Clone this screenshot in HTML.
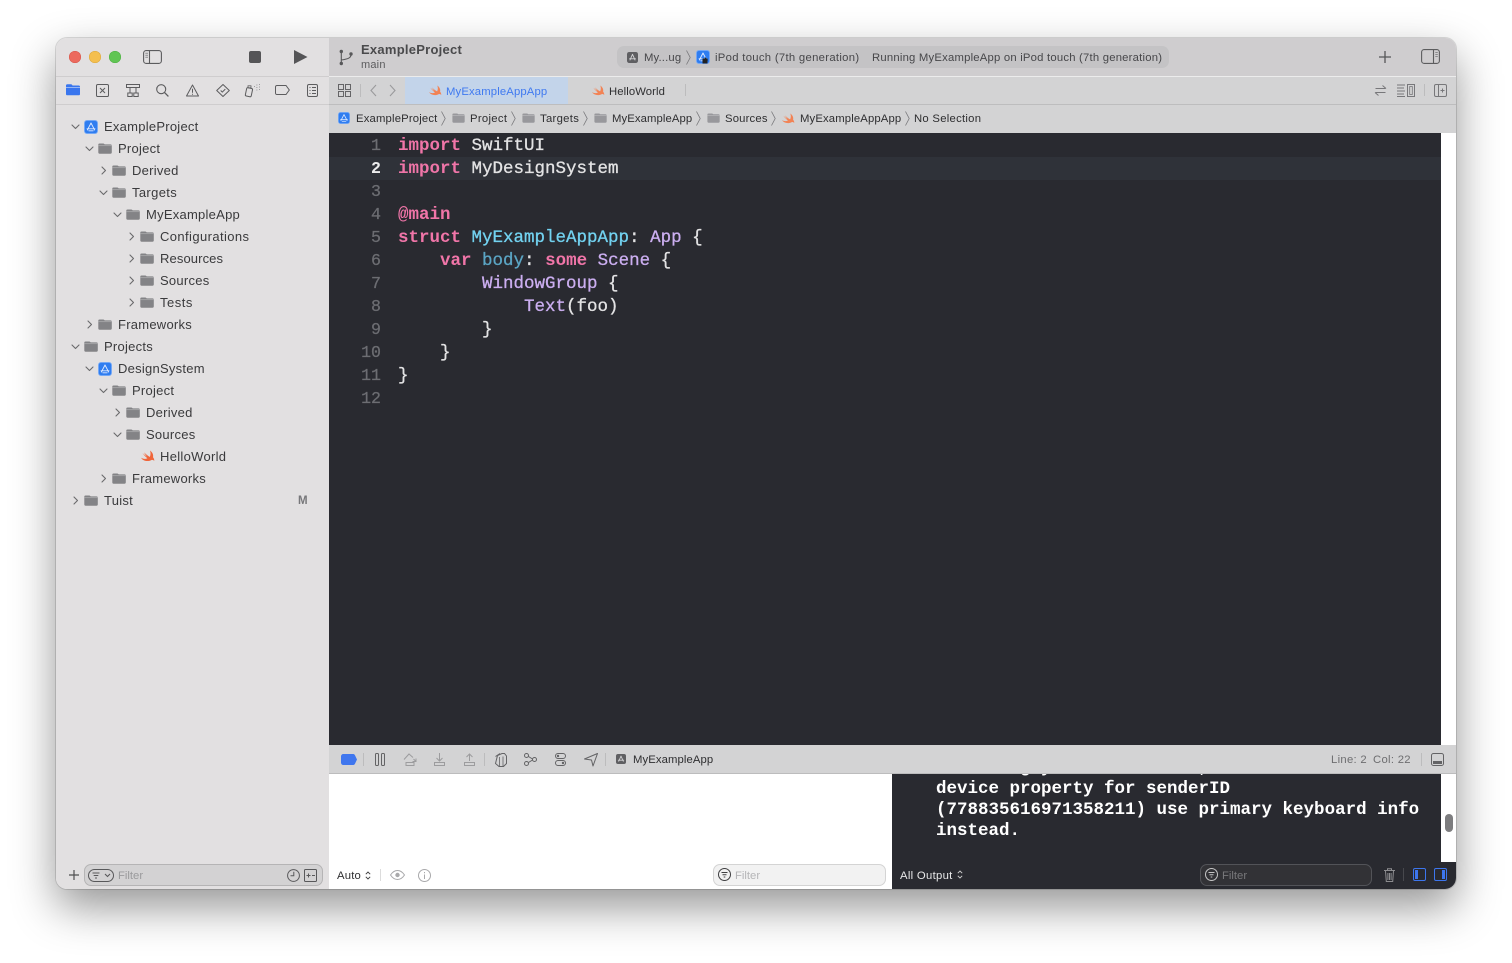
<!DOCTYPE html>
<html lang="en">
<head>
<meta charset="utf-8">
<title>Xcode</title>
<style>
html,body{margin:0;padding:0;width:1512px;height:963px;overflow:hidden;background:#fff;font-family:"Liberation Sans",sans-serif;}
.a{position:absolute;white-space:nowrap;}
#win{position:absolute;left:56px;top:38px;width:1400px;height:851px;border-radius:11px;box-shadow:0 18px 44px rgba(0,0,0,.42),0 0 0 1px rgba(0,0,0,.13);}
#clip{position:absolute;left:56px;top:38px;width:1400px;height:851px;border-radius:11px;overflow:hidden;background:#e2e0e1;}
.full{position:absolute;left:-56px;top:-38px;width:1512px;height:963px;}
.r{position:absolute;}
.tr{font-size:13px;line-height:16px;color:#3a3a3c;letter-spacing:.25px;margin-top:1px;}
.bc{font-size:11.3px;line-height:14px;color:#2e2e30;top:112px;letter-spacing:.17px;}
.code{font-family:"Liberation Mono",monospace;font-size:17.5px;line-height:23px;left:398px;color:#e3e3e4;white-space:pre;font-weight:400;-webkit-text-stroke:.3px currentColor;}
.ln{font-family:"Liberation Mono",monospace;font-size:16.6px;line-height:23px;color:#6c6d72;width:52px;left:329px;text-align:right;-webkit-text-stroke:.25px currentColor;}
.con{left:936px;font-family:"Liberation Mono",monospace;font-size:17.5px;line-height:21px;font-weight:700;color:#fff;white-space:pre;}
.k{color:#f075a8;font-weight:700;-webkit-text-stroke:0}.p{color:#cbaef0}.c{color:#72d2f0}.v{color:#5ba5c4}
svg{position:absolute;overflow:visible;fill:none;}
</style>
</head>
<body>
<svg width="0" height="0" style="position:absolute">
<defs>
<symbol id="folder" viewBox="0 0 14 11" overflow="visible"><path d="M.3 1.6C.3.9.8.5 1.500.5h3.700c.5 0 .8.2 1.100.5l.4.4h5.800c.9 0 1.300.5 1.300 1.300v6.700c0 .8-.5 1.300-1.300 1.300H1.600C.8 10.700.3 10.200.3 9.400Z" fill="#838386"/><path d="M.3 2.700h13.400" stroke="#b0b0b2" stroke-width=".7"/></symbol>
<symbol id="folderl" viewBox="0 0 14 11" overflow="visible"><path d="M.3 1.600C.3.9.8.5 1.500.5h3.700c.5 0 .8.2 1.100.5l.4.4h5.800c.9 0 1.300.5 1.300 1.300v6.700c0 .8-.5 1.300-1.300 1.300H1.600C.8 10.700.3 10.200.3 9.400Z" fill="#98989c"/><path d="M.3 2.700h13.400" stroke="#bdbdbf" stroke-width=".7"/></symbol>
<symbol id="app" viewBox="0 0 14 14" overflow="visible"><rect x=".5" y=".5" width="13" height="13" rx="2.500" fill="#2f7df0" stroke="#74a8f5" stroke-width=".9"/><path d="M7 3 3.400 10M7 3l3.600 7M3 8.800h8M4.800 10.800h4.400" stroke="#dfeaff" stroke-width=".9" stroke-linecap="round"/></symbol>
<symbol id="swift" viewBox="0 0 14 12" overflow="visible"><path d="M9 .5C11.500 2.300 12.600 4.800 12 7.200 13 8.400 13.400 9.600 13.200 11 12.500 9.900 11.400 9.600 10.300 10.100 8 11.400 4.400 11.500 1.600 9.600.9 9 .4 8.400 0 7.800 1.600 8.900 4.300 9.300 6.400 8.200 4.300 6.600 2.600 4.700 1.400 3 3 4.500 4.700 5.800 6 6.600 4.800 5.200 3.800 3.800 3 2.400 4.800 4.200 6.800 5.800 8.800 7 9.700 5 9.800 2.800 9 .5Z" fill="#f0653a"/></symbol>
<symbol id="swiftl" viewBox="0 0 14 12" overflow="visible"><path d="M9 .5C11.500 2.300 12.600 4.800 12 7.200 13 8.400 13.400 9.600 13.200 11 12.500 9.900 11.400 9.600 10.300 10.100 8 11.400 4.400 11.500 1.600 9.600.9 9 .4 8.400 0 7.800 1.600 8.900 4.300 9.300 6.400 8.200 4.300 6.600 2.600 4.700 1.400 3 3 4.500 4.700 5.800 6 6.600 4.800 5.200 3.800 3.800 3 2.400 4.800 4.200 6.800 5.800 8.800 7 9.700 5 9.800 2.800 9 .5Z" fill="#f28355"/></symbol>
<symbol id="down" viewBox="0 0 9 6" overflow="visible"><path d="M1 1l3.500 3.500L8 1" stroke="#6a6a6c" stroke-width="1.100" fill="none" stroke-linecap="round" stroke-linejoin="round"/></symbol>
<symbol id="right" viewBox="0 0 6 9" overflow="visible"><path d="M1 1l3.500 3.500L1 8" stroke="#6a6a6c" stroke-width="1.100" fill="none" stroke-linecap="round" stroke-linejoin="round"/></symbol>
<symbol id="sep" viewBox="0 0 5 15" overflow="visible"><path d="M.5.5l3.700 7-3.700 7" stroke="#77777a" stroke-width=".8" fill="none"/></symbol>
<symbol id="appg" viewBox="0 0 11 11" overflow="visible"><rect width="11" height="11" rx="2.200" fill="#5f5f62"/><path d="M5.500 2.300 3 8M5.500 2.300 8 8M2.500 6.800h6" stroke="#d6d6d8" stroke-width=".9" stroke-linecap="round"/></symbol>
</defs>
</svg>

<div id="win"></div>
<div id="clip"><div class="full">

<!-- backgrounds -->
<div class="r" style="left:56px;top:38px;width:273px;height:851px;background:#e2e0e1"></div>
<div class="r" style="left:56px;top:76px;width:273px;height:1px;background:#cfcdce"></div>
<div class="r" style="left:56px;top:104px;width:273px;height:1px;background:#cfcdce"></div>
<div class="r" style="left:329px;top:38px;width:1127px;height:38px;background:#cfcdcf"></div>
<div class="r" style="left:329px;top:76px;width:1127px;height:1px;background:#ececec"></div>
<div class="r" style="left:329px;top:77px;width:1127px;height:27px;background:#d3d3d4"></div>
<div class="r" style="left:329px;top:104px;width:1127px;height:1px;background:#bdbdbe"></div>
<div class="r" style="left:329px;top:105px;width:1127px;height:28px;background:#d3d3d4"></div>
<div class="r" style="left:329px;top:133px;width:1112px;height:612px;background:#292a30"></div>
<div class="r" style="left:1441px;top:133px;width:15px;height:612px;background:#fff"></div>
<div class="r" style="left:329px;top:157px;width:1112px;height:23px;background:#2f3239"></div>
<div class="r" style="left:329px;top:745px;width:1127px;height:28px;background:#d3d3d4"></div>
<div class="r" style="left:329px;top:773px;width:1127px;height:1px;background:#bcbcbd"></div>
<div class="r" style="left:329px;top:774px;width:563px;height:115px;background:#fff"></div>
<div class="r" style="left:892px;top:774px;width:564px;height:115px;background:#292a30"></div>
<div class="r" style="left:1441px;top:774px;width:15px;height:88px;background:#fff"></div>
<div class="r" style="left:1445px;top:814px;width:8px;height:18px;border-radius:4px;background:#7d7d7f"></div>

<!-- traffic lights -->
<div class="r" style="left:69px;top:51px;width:12px;height:12px;border-radius:50%;background:#ec6a5e;box-shadow:inset 0 0 0 .5px #d5574c"></div>
<div class="r" style="left:89px;top:51px;width:12px;height:12px;border-radius:50%;background:#f4bf4f;box-shadow:inset 0 0 0 .5px #d9a63e"></div>
<div class="r" style="left:109px;top:51px;width:12px;height:12px;border-radius:50%;background:#61c554;box-shadow:inset 0 0 0 .5px #4fae44"></div>

<!-- sidebar toggle, stop, play -->
<svg style="left:143px;top:50px" width="19" height="14"><rect x=".6" y=".6" width="17.800" height="12.800" rx="2.500" stroke="#5c5c5e" stroke-width="1.100"/><path d="M6.500 1v12" stroke="#5c5c5e" stroke-width="1.100"/><path d="M2.300 3.300h2.700M2.300 5.300h2.700M2.300 7.300h2.700" stroke="#8a8a8c" stroke-width="1"/></svg>
<div class="r" style="left:249px;top:51px;width:12px;height:12px;border-radius:2px;background:#555557"></div>
<svg style="left:294px;top:50px" width="14" height="14"><path d="M0 0 13.500 7 0 14Z" fill="#555557"/></svg>

<!-- navigator tabs -->
<svg style="left:66px;top:84px" width="14" height="12"><path d="M0 1.500C0 .7.500.2 1.300.2h3.500c.6 0 .9.200 1.200.6l.5.700h6.200c.8 0 1.300.5 1.300 1.300v7.300c0 .7-.5 1.200-1.300 1.200H1.300C.5 11.300 0 10.800 0 10.100Z" fill="#3a76ee"/><path d="M0 3.300h14" stroke="#cfdcf6" stroke-width=".6"/></svg>
<svg style="left:96px;top:84px" width="13" height="13"><rect x=".5" y=".5" width="12" height="12" rx="1.300" stroke="#5c5c5e"/><path d="M4 4l5 5M9 4 4 9" stroke="#5c5c5e"/></svg>
<svg style="left:126px;top:84px" width="14" height="13"><path d="M.5 .5h13v3H.5ZM4 3.500v5M10 3.500v5M1.800 9h4.400v3.500H1.800ZM7.800 9h4.400v3.500H7.800Z" stroke="#5c5c5e"/></svg>
<svg style="left:156px;top:84px" width="13" height="13"><circle cx="5.200" cy="5.200" r="4.500" stroke="#5c5c5e" stroke-width="1.100"/><path d="M8.600 8.600l3.800 3.800" stroke="#5c5c5e" stroke-width="1.300"/></svg>
<svg style="left:186px;top:84px" width="13" height="13"><path d="M6.500 1 12.500 12H.5Z" stroke="#5c5c5e" stroke-linejoin="round"/><path d="M6.500 4.700v4M6.500 9.700v1" stroke="#5c5c5e"/></svg>
<svg style="left:216px;top:84px" width="14" height="13"><path d="M7 .5 13.300 6.500 7 12.500.7 6.500Z" stroke="#5c5c5e" stroke-linejoin="round"/><path d="M4.700 6.500l1.600 1.600 3-3" stroke="#5c5c5e"/></svg>
<svg style="left:245px;top:84px" width="16" height="13"><rect x="1" y="4" width="6" height="8.500" rx="1.200" stroke="#5c5c5e" transform="rotate(12 4 8)"/><rect x="3" y="1.800" width="3" height="2" stroke="#5c5c5e" stroke-width=".8"/><path d="M9 2.500h.8M11.500 1h.8M11.500 3.500h.8M14 .5h.8M14 3h.8M14 5.500h.8M11.500 6h.8" stroke="#8a8a8c"/></svg>
<svg style="left:275px;top:85px" width="15" height="10"><path d="M2 .5h9l3.300 4.500L11 9.500H2C1.100 9.500.5 8.900.5 8V2C.5 1.100 1.100.5 2 .5Z" stroke="#5c5c5e"/></svg>
<svg style="left:307px;top:84px" width="11" height="13"><rect x=".5" y=".5" width="10" height="12" rx="1.500" stroke="#5c5c5e"/><path d="M2.500 3.500h1M5 3.500h4M2.500 6.500h1M5 6.500h4M2.500 9.500h1M5 9.500h4" stroke="#5c5c5e"/></svg>

<!-- tree -->
<svg style="left:70.500px;top:124px" width="9" height="6"><use href="#down"/></svg>
<svg style="left:84px;top:120px" width="14" height="14"><use href="#app"/></svg>
<div class="a tr" style="left:104px;top:118px">ExampleProject</div>

<svg style="left:84.500px;top:146px" width="9" height="6"><use href="#down"/></svg>
<svg style="left:98px;top:143px" width="14" height="11"><use href="#folder"/></svg>
<div class="a tr" style="left:118px;top:140px">Project</div>

<svg style="left:100.500px;top:165.500px" width="6" height="9"><use href="#right"/></svg>
<svg style="left:112px;top:165px" width="14" height="11"><use href="#folder"/></svg>
<div class="a tr" style="left:132px;top:162px">Derived</div>

<svg style="left:98.500px;top:190px" width="9" height="6"><use href="#down"/></svg>
<svg style="left:112px;top:187px" width="14" height="11"><use href="#folder"/></svg>
<div class="a tr" style="left:132px;top:184px;letter-spacing:.35px">Targets</div>

<svg style="left:112.500px;top:212px" width="9" height="6"><use href="#down"/></svg>
<svg style="left:126px;top:209px" width="14" height="11"><use href="#folder"/></svg>
<div class="a tr" style="left:146px;top:206px">MyExampleApp</div>

<svg style="left:128.500px;top:231.500px" width="6" height="9"><use href="#right"/></svg>
<svg style="left:140px;top:231px" width="14" height="11"><use href="#folder"/></svg>
<div class="a tr" style="left:160px;top:228px;letter-spacing:.4px">Configurations</div>

<svg style="left:128.500px;top:253.500px" width="6" height="9"><use href="#right"/></svg>
<svg style="left:140px;top:253px" width="14" height="11"><use href="#folder"/></svg>
<div class="a tr" style="left:160px;top:250px;letter-spacing:.11px">Resources</div>

<svg style="left:128.500px;top:275.500px" width="6" height="9"><use href="#right"/></svg>
<svg style="left:140px;top:275px" width="14" height="11"><use href="#folder"/></svg>
<div class="a tr" style="left:160px;top:272px">Sources</div>

<svg style="left:128.500px;top:297.500px" width="6" height="9"><use href="#right"/></svg>
<svg style="left:140px;top:297px" width="14" height="11"><use href="#folder"/></svg>
<div class="a tr" style="left:160px;top:294px;letter-spacing:.5px">Tests</div>

<svg style="left:86.500px;top:319.500px" width="6" height="9"><use href="#right"/></svg>
<svg style="left:98px;top:319px" width="14" height="11"><use href="#folder"/></svg>
<div class="a tr" style="left:118px;top:316px">Frameworks</div>

<svg style="left:70.500px;top:344px" width="9" height="6"><use href="#down"/></svg>
<svg style="left:84px;top:341px" width="14" height="11"><use href="#folder"/></svg>
<div class="a tr" style="left:104px;top:338px">Projects</div>

<svg style="left:84.500px;top:366px" width="9" height="6"><use href="#down"/></svg>
<svg style="left:98px;top:362px" width="14" height="14"><use href="#app"/></svg>
<div class="a tr" style="left:118px;top:360px">DesignSystem</div>

<svg style="left:98.500px;top:388px" width="9" height="6"><use href="#down"/></svg>
<svg style="left:112px;top:385px" width="14" height="11"><use href="#folder"/></svg>
<div class="a tr" style="left:132px;top:382px">Project</div>

<svg style="left:114.500px;top:407.500px" width="6" height="9"><use href="#right"/></svg>
<svg style="left:126px;top:407px" width="14" height="11"><use href="#folder"/></svg>
<div class="a tr" style="left:146px;top:404px">Derived</div>

<svg style="left:112.500px;top:432px" width="9" height="6"><use href="#down"/></svg>
<svg style="left:126px;top:429px" width="14" height="11"><use href="#folder"/></svg>
<div class="a tr" style="left:146px;top:426px">Sources</div>

<svg style="left:141px;top:450px" width="14" height="12"><use href="#swift"/></svg>
<div class="a tr" style="left:160px;top:448px;letter-spacing:.3px">HelloWorld</div>

<svg style="left:100.500px;top:473.500px" width="6" height="9"><use href="#right"/></svg>
<svg style="left:112px;top:473px" width="14" height="11"><use href="#folder"/></svg>
<div class="a tr" style="left:132px;top:470px">Frameworks</div>

<svg style="left:72.500px;top:495.500px" width="6" height="9"><use href="#right"/></svg>
<svg style="left:84px;top:495px" width="14" height="11"><use href="#folder"/></svg>
<div class="a tr" style="left:104px;top:492px">Tuist</div>
<div class="a" style="left:298px;top:494px;font-size:11.500px;line-height:14px;font-weight:700;color:#77777a">M</div>

<!-- sidebar footer -->
<svg style="left:69px;top:870px" width="10" height="10"><path d="M5 0v10M0 5h10" stroke="#4f4f51" stroke-width="1.200"/></svg>
<div class="r" style="left:84px;top:864px;width:239px;height:22px;box-sizing:border-box;border:1px solid #b5b4b5;border-radius:7px;background:#d3d2d3"></div>
<svg style="left:88px;top:869px" width="26" height="13"><rect x=".5" y=".5" width="25" height="12" rx="6" stroke="#58585a"/><path d="M4.500 4h7M5.700 6.500h4.600M7 9h2" stroke="#58585a"/><path d="M17 5l2.500 2.500L22 5" stroke="#58585a" stroke-width="1.100"/></svg>
<div class="a" style="left:118px;top:869px;font-size:11.300px;line-height:14px;color:#9a9a9c">Filter</div>
<svg style="left:287px;top:869px" width="13" height="13"><circle cx="6.500" cy="6.500" r="5.900" stroke="#58585a"/><path d="M6.800 2.800v4H3.500" stroke="#58585a"/></svg>
<svg style="left:304px;top:869px" width="13" height="13"><rect x=".5" y=".5" width="12" height="12" rx="1" stroke="#58585a"/><path d="M2.500 6.500h4M4.500 4.500v4M8 6.500h3" stroke="#58585a"/></svg>

<!-- toolbar right -->
<svg style="left:339px;top:49px" width="14" height="17"><circle cx="2.300" cy="2.500" r="1.700" fill="#58585a"/><circle cx="2.300" cy="14.500" r="1.700" fill="#58585a"/><circle cx="12" cy="5" r="1.700" fill="#58585a"/><path d="M2.300 3v11M12 5.500c0 3.500-3 4.500-9.700 5.500" stroke="#58585a" stroke-width="1.100"/></svg>
<div class="a" style="left:361px;top:42px;font-size:13px;line-height:15px;font-weight:700;color:#4a4a4c;letter-spacing:.25px">ExampleProject</div>
<div class="a" style="left:361px;top:59px;font-size:11px;line-height:13px;color:#5c5c5e;letter-spacing:.2px">main</div>

<div class="r" style="left:617px;top:46px;width:552px;height:22px;border-radius:7px;background:#c4c3c5"></div>
<svg style="left:627px;top:52px" width="11" height="11"><use href="#appg"/></svg>
<div class="a" style="left:644px;top:51px;font-size:11.300px;line-height:14px;color:#47474a;letter-spacing:.15px">My...ug</div>
<svg style="left:686px;top:50px" width="5" height="15"><use href="#sep"/></svg>
<svg style="left:696px;top:50px" width="14" height="14"><use href="#app"/><path d="M6.500 8.500h5v5h-5Z" fill="#222"/><path d="M9 7l3 3-3 3" fill="#222"/></svg>
<div class="a" style="left:715px;top:51px;font-size:11.300px;line-height:14px;color:#47474a;letter-spacing:.3px">iPod touch (7th generation)</div>
<div class="a" style="left:872px;top:51px;font-size:11.300px;line-height:14px;color:#47474a;letter-spacing:.21px">Running MyExampleApp on iPod touch (7th generation)</div>

<svg style="left:1379px;top:51px" width="12" height="12"><path d="M6 0v12M0 6h12" stroke="#555557" stroke-width="1.300"/></svg>
<svg style="left:1421px;top:49px" width="19" height="15"><rect x=".6" y=".6" width="17.800" height="13.800" rx="2.500" stroke="#5c5c5e" stroke-width="1.100"/><path d="M12.500 1v13" stroke="#5c5c5e" stroke-width="1.100"/><path d="M14.300 3.500h2.500M14.300 5.500h2.500M14.300 7.500h2.500" stroke="#8a8a8c" stroke-width="1"/></svg>

<!-- tab row -->
<svg style="left:338px;top:84px" width="13" height="13"><path d="M.5.500h5v5h-5ZM7.500.500h5v5h-5ZM.5 7.500h5v5h-5ZM7.500 7.500h5v5h-5Z" stroke="#646466"/></svg>
<div class="r" style="left:360px;top:84px;width:1px;height:13px;background:#bcbcbd"></div>
<svg style="left:370px;top:84px" width="7" height="13"><path d="M6 1 1 6.500 6 12" stroke="#9a9a9c" stroke-width="1.100"/></svg>
<svg style="left:389px;top:84px" width="7" height="13"><path d="M1 1 6 6.500 1 12" stroke="#9a9a9c" stroke-width="1.100"/></svg>
<div class="r" style="left:405px;top:77px;width:163px;height:27px;background:#c3d4ea"></div>
<svg style="left:429px;top:85px" width="13" height="11"><use href="#swiftl"/></svg>
<div class="a" style="left:446px;top:85px;font-size:11.300px;line-height:14px;color:#3f79f0;letter-spacing:.14px">MyExampleAppApp</div>
<svg style="left:592px;top:85px" width="13" height="11"><use href="#swiftl"/></svg>
<div class="a" style="left:609px;top:85px;font-size:11.300px;line-height:14px;color:#2e2e30;letter-spacing:.1px">HelloWorld</div>
<div class="r" style="left:685px;top:84px;width:1px;height:12px;background:#bcbcbd"></div>

<svg style="left:1374px;top:84px" width="13" height="13"><path d="M1.500 4.500h10M8.500 1.500l3.500 3M11.500 8.500h-10M4.500 11.500 1 8.500" stroke="#77777a" stroke-width="1"/></svg>
<svg style="left:1397px;top:84px" width="18" height="13"><path d="M0 1h8M0 4h7M0 7h8M0 10h7M0 12.500h8" stroke="#77777a"/><rect x="10.500" y=".5" width="7" height="12" stroke="#77777a"/><rect x="12.700" y="2.500" width="2.600" height="8" stroke="#77777a" stroke-width=".8"/></svg>
<div class="r" style="left:1424px;top:84px;width:1px;height:12px;background:#bcbcbd"></div>
<svg style="left:1434px;top:84px" width="13" height="13"><rect x=".5" y=".5" width="12" height="12" rx="1.500" stroke="#77777a"/><path d="M4.500 1v11M6.500 6.500h4M8.500 4.500v4" stroke="#77777a"/></svg>

<!-- breadcrumbs -->
<svg style="left:338px;top:112px" width="12" height="12" viewBox="0 0 14 14"><use href="#app" width="14" height="14"/></svg>
<div class="a bc" style="left:356px">ExampleProject</div>
<svg style="left:441px;top:111px" width="5" height="15"><use href="#sep"/></svg>
<svg style="left:452px;top:113px" width="13" height="10"><use href="#folderl"/></svg>
<div class="a bc" style="left:470px;letter-spacing:.3px">Project</div>
<svg style="left:511px;top:111px" width="5" height="15"><use href="#sep"/></svg>
<svg style="left:522px;top:113px" width="13" height="10"><use href="#folderl"/></svg>
<div class="a bc" style="left:540px;letter-spacing:.3px">Targets</div>
<svg style="left:583px;top:111px" width="5" height="15"><use href="#sep"/></svg>
<svg style="left:594px;top:113px" width="13" height="10"><use href="#folderl"/></svg>
<div class="a bc" style="left:612px;letter-spacing:.1px">MyExampleApp</div>
<svg style="left:696px;top:111px" width="5" height="15"><use href="#sep"/></svg>
<svg style="left:707px;top:113px" width="13" height="10"><use href="#folderl"/></svg>
<div class="a bc" style="left:725px">Sources</div>
<svg style="left:771px;top:111px" width="5" height="15"><use href="#sep"/></svg>
<svg style="left:782px;top:113px" width="13" height="11"><use href="#swiftl"/></svg>
<div class="a bc" style="left:800px;letter-spacing:.14px">MyExampleAppApp</div>
<svg style="left:905px;top:111px" width="5" height="15"><use href="#sep"/></svg>
<div class="a bc" style="left:914px;letter-spacing:.27px">No Selection</div>

<!-- line numbers -->
<div class="a ln" style="top:134px">1</div>
<div class="a ln" style="top:157px;color:#ececed;font-weight:700;-webkit-text-stroke:0">2</div>
<div class="a ln" style="top:180px">3</div>
<div class="a ln" style="top:203px">4</div>
<div class="a ln" style="top:226px">5</div>
<div class="a ln" style="top:249px">6</div>
<div class="a ln" style="top:272px">7</div>
<div class="a ln" style="top:295px">8</div>
<div class="a ln" style="top:318px">9</div>
<div class="a ln" style="top:341px">10</div>
<div class="a ln" style="top:364px">11</div>
<div class="a ln" style="top:387px">12</div>

<!-- code -->
<div class="a code" style="top:135px"><span class="k">import</span> SwiftUI</div>
<div class="a code" style="top:158px"><span class="k">import</span> MyDesignSystem</div>
<div class="a code" style="top:204px"><span class="k">@main</span></div>
<div class="a code" style="top:227px"><span class="k">struct</span> <span class="c">MyExampleAppApp</span>: <span class="p">App</span> {</div>
<div class="a code" style="top:250px">    <span class="k">var</span> <span class="v">body</span>: <span class="k">some</span> <span class="p">Scene</span> {</div>
<div class="a code" style="top:273px">        <span class="p">WindowGroup</span> {</div>
<div class="a code" style="top:296px">            <span class="p">Text</span>(foo)</div>
<div class="a code" style="top:319px">        }</div>
<div class="a code" style="top:342px">    }</div>
<div class="a code" style="top:365px">}</div>

<!-- debug bar -->
<svg style="left:341px;top:754px" width="16" height="11"><path d="M2.500 0H12c.8 0 1.300.3 1.800.9L16 5.500l-2.200 4.600c-.5.600-1 .9-1.800.9H2.500C1 11 0 10 0 8.500v-6C0 1 1 0 2.500 0Z" fill="#3f76ee"/></svg>
<div class="r" style="left:363px;top:753px;width:1px;height:13px;background:#bcbcbd"></div>
<svg style="left:375px;top:753px" width="10" height="13"><rect x=".5" y=".5" width="3" height="12" rx="1" stroke="#636365"/><rect x="6.500" y=".5" width="3" height="12" rx="1" stroke="#636365"/></svg>
<svg style="left:403px;top:753px" width="14" height="13"><path d="M1 6.500 6 1l4 3.500M13 5.500v3H9.500M13 8.500 10.500 6" stroke="#9c9c9e"/><rect x="3" y="9.500" width="8" height="3" stroke="#9c9c9e"/></svg>
<svg style="left:434px;top:753px" width="11" height="13"><path d="M5.500 0v8M2.500 5l3 3 3-3" stroke="#9c9c9e"/><rect x=".5" y="9.500" width="10" height="3" stroke="#9c9c9e"/></svg>
<svg style="left:464px;top:753px" width="11" height="13"><path d="M5.500 8V1M2.500 4l3-3 3 3" stroke="#9c9c9e"/><rect x=".5" y="9.500" width="10" height="3" stroke="#9c9c9e"/></svg>
<div class="r" style="left:484px;top:753px;width:1px;height:13px;background:#bcbcbd"></div>
<svg style="left:495px;top:753px" width="12" height="14"><path d="M.5 3.500 5 .5M2.500 2.500 7 .5h2.500L11.500 3v7.500l-3 3H4L.5 10.500Z" stroke="#636365"/><path d="M4.500 4v9.500M8 3.500v9.500" stroke="#636365" stroke-width=".8"/></svg>
<svg style="left:524px;top:753px" width="13" height="13"><circle cx="2.500" cy="2.500" r="2" stroke="#636365"/><circle cx="2.500" cy="10.500" r="2" stroke="#636365"/><circle cx="10.500" cy="6.500" r="2" stroke="#636365"/><path d="M4.500 3.500l4 2.500M4.500 9.500l4-2.500" stroke="#636365"/></svg>
<svg style="left:555px;top:753px" width="11" height="13"><rect x=".5" y=".5" width="10" height="5" rx="2.500" stroke="#636365"/><rect x=".5" y="7.500" width="10" height="5" rx="2.500" stroke="#636365"/><circle cx="3" cy="3" r="1.200" fill="#636365"/><circle cx="8" cy="10" r="1.200" fill="#636365"/></svg>
<svg style="left:584px;top:753px" width="14" height="13"><path d="M.5 6 13.500.5 9 13l-1.500-6Z" stroke="#636365" stroke-linejoin="round"/></svg>
<div class="r" style="left:605px;top:753px;width:1px;height:13px;background:#bcbcbd"></div>
<svg style="left:616px;top:754px" width="10" height="10" viewBox="0 0 11 11"><use href="#appg" width="11" height="11"/></svg>
<div class="a" style="left:633px;top:753px;font-size:11.300px;line-height:14px;color:#2e2e30;letter-spacing:.1px">MyExampleApp</div>
<div class="a" style="left:1331px;top:753px;font-size:11.300px;line-height:14px;color:#6e6e70;letter-spacing:.3px">Line: 2</div>
<div class="a" style="left:1373px;top:753px;font-size:11.300px;line-height:14px;color:#6e6e70;letter-spacing:.3px">Col: 22</div>
<div class="r" style="left:1421px;top:753px;width:1px;height:13px;background:#bcbcbd"></div>
<svg style="left:1431px;top:753px" width="13" height="13"><rect x=".5" y=".5" width="12" height="12" rx="2" stroke="#636365"/><rect x="2" y="8" width="9" height="3" fill="#636365"/></svg>

<!-- variables footer -->
<div class="a" style="left:337px;top:869px;font-size:11.300px;line-height:14px;color:#2e2e30;letter-spacing:.2px">Auto</div>
<svg style="left:365px;top:871px" width="6" height="9"><path d="M.8 3.200 3 1l2.200 2.200M.8 5.800 3 8l2.200-2.200" stroke="#3a3a3c" stroke-width=".9"/></svg>
<div class="r" style="left:380px;top:869px;width:1px;height:12px;background:#dcdcdc"></div>
<svg style="left:390px;top:870px" width="15" height="10"><path d="M.5 5C2.500 2 5 .5 7.500.5S12.500 2 14.500 5c-2 3-4.500 4.500-7 4.500S2.500 8 .5 5Z" stroke="#a9a9ab"/><circle cx="7.500" cy="5" r="2.200" fill="#a9a9ab"/></svg>
<svg style="left:418px;top:869px" width="13" height="13"><circle cx="6.500" cy="6.500" r="6" stroke="#a9a9ab"/><path d="M6.500 5.500v4.500M6.500 3v1.200" stroke="#a9a9ab"/></svg>
<div class="r" style="left:713px;top:864px;width:173px;height:22px;box-sizing:border-box;border:1px solid #d4d4d4;border-radius:7px;background:#f2f2f2"></div>
<svg style="left:718px;top:868px" width="13" height="13"><circle cx="6.500" cy="6.500" r="6" stroke="#3f3f41"/><path d="M3.500 4.500h6M4.500 6.800h4M5.700 9h1.600" stroke="#3f3f41"/></svg>
<div class="a" style="left:735px;top:869px;font-size:11.300px;line-height:14px;color:#b5b5b7">Filter</div>

<!-- console -->
<div class="r" style="left:892px;top:774px;width:549px;height:88px;overflow:hidden">
<div class="a con" style="left:44px;top:-16px">        g y              ,</div>
<div class="a con" style="left:44px;top:5px">device property for senderID</div>
<div class="a con" style="left:44px;top:26px">(778835616971358211) use primary keyboard info</div>
<div class="a con" style="left:44px;top:47px">instead.</div>
</div>
<div class="a" style="left:900px;top:869px;font-size:11.300px;line-height:14px;color:#e8e8e9;letter-spacing:.3px">All Output</div>
<svg style="left:957px;top:870px" width="6" height="9"><path d="M.8 3.200 3 1l2.200 2.200M.8 5.800 3 8l2.200-2.200" stroke="#d0d0d1" stroke-width=".9"/></svg>
<div class="r" style="left:1200px;top:864px;width:172px;height:22px;box-sizing:border-box;border:1px solid #525358;border-radius:7px;background:#323236"></div>
<svg style="left:1205px;top:868px" width="13" height="13"><circle cx="6.500" cy="6.500" r="6" stroke="#c5c5c6"/><path d="M3.500 4.500h6M4.500 6.800h4M5.700 9h1.600" stroke="#c5c5c6"/></svg>
<div class="a" style="left:1222px;top:869px;font-size:11.300px;line-height:14px;color:#78787b">Filter</div>
<svg style="left:1384px;top:868px" width="11" height="14"><path d="M0 2.500h11M3.500 2.500V.8h4v1.700" stroke="#8d8d90"/><path d="M1.500 3l.8 10.500h6.400L9.500 3M3.900 5v7M5.500 5v7M7.100 5v7" stroke="#8d8d90"/></svg>
<div class="r" style="left:1403px;top:868px;width:1px;height:13px;background:#47484d"></div>
<svg style="left:1413px;top:868px" width="13" height="13"><rect x=".5" y=".5" width="12" height="12" rx="1.500" stroke="#3d76ee"/><rect x="2" y="2" width="3" height="9" fill="#3d76ee"/></svg>
<svg style="left:1434px;top:868px" width="13" height="13"><rect x=".5" y=".5" width="12" height="12" rx="1.500" stroke="#3d76ee"/><rect x="8" y="2" width="3" height="9" fill="#3d76ee"/></svg>

</div></div>
</body>
</html>
